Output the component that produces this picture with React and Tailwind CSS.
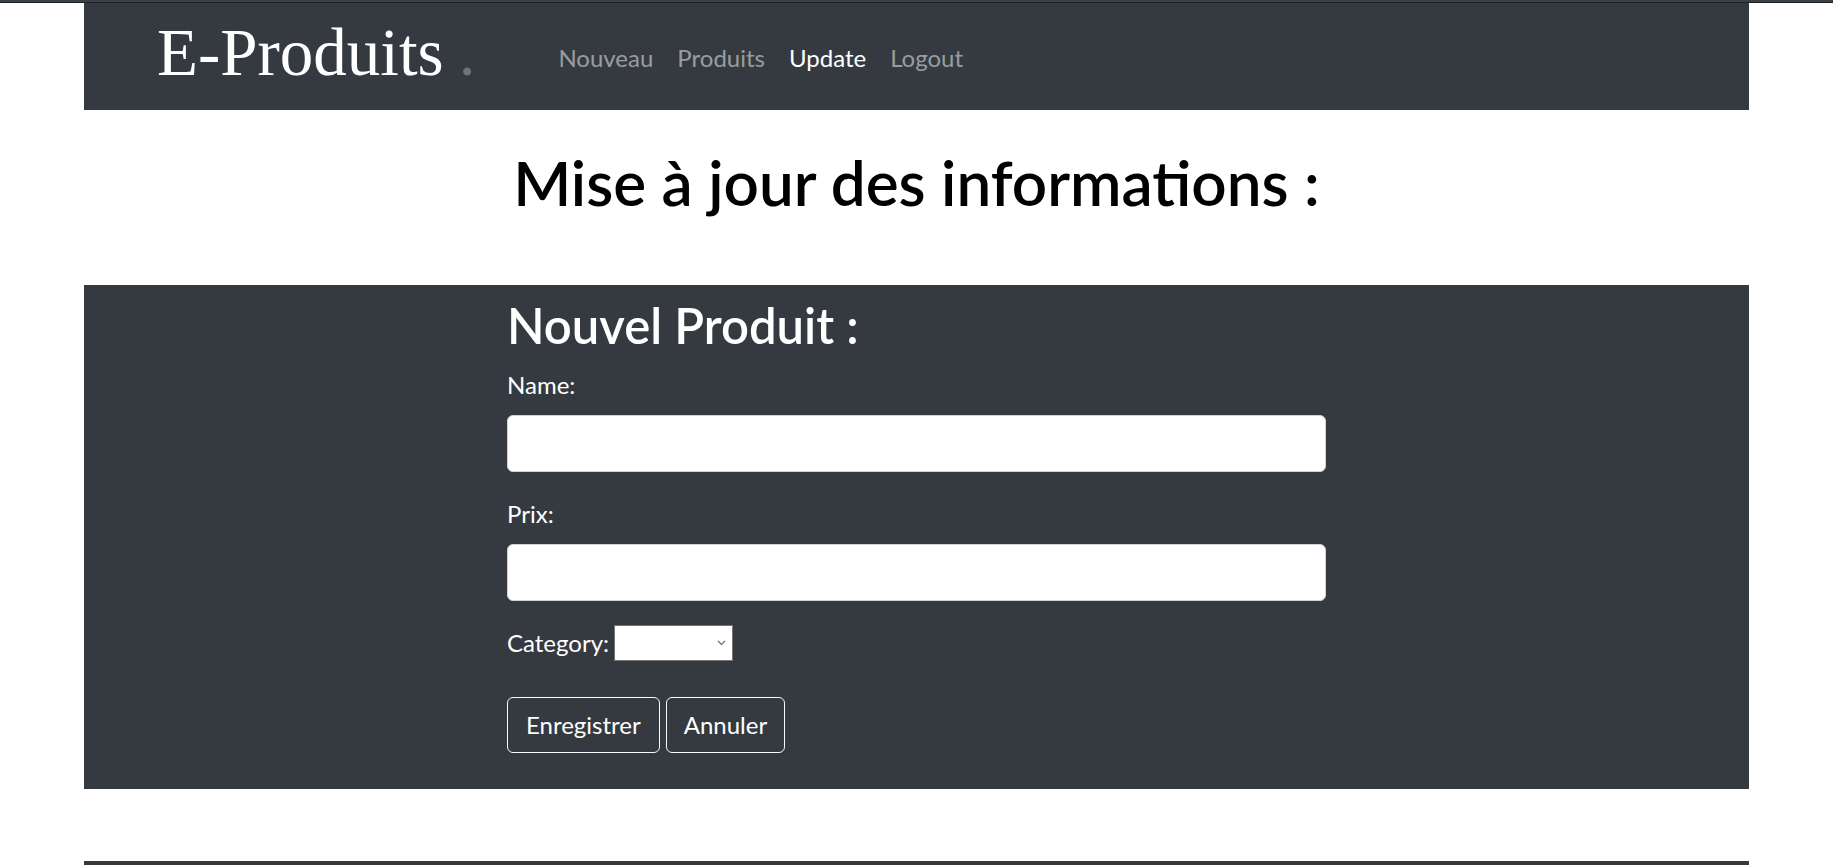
import React, { useState } from 'react';

const sans = "font-['Segoe_UI',Lato,'Noto_Sans',sans-serif]";

const App = () => {
  const [name, setName] = useState('');
  const [prix, setPrix] = useState('');
  const [category, setCategory] = useState('');

  const links = [
    { label: 'Nouveau', active: false },
    { label: 'Produits', active: false },
    { label: 'Update', active: true },
    { label: 'Logout', active: false },
  ];

  return (
    <div className={`min-h-screen bg-white ${sans}`}>
      <div className="h-[3px] bg-[#3b4148] border-b border-[#1d2125]" />
      <div className="w-[1665px] mx-auto">
        <nav className="h-[107px] bg-[#343a40] flex items-start pl-[73px]">
          <a className="pt-[11px] font-['Liberation_Serif',serif] text-[67px] leading-[1.15] text-white">
            E-Produits<span className="ml-[15px] text-[#6c757d]">.</span>
          </a>
          <ul className="flex ml-[71px] pt-[37px]">
            {links.map((l) => (
              <li key={l.label}>
                <a
                  className={`block px-3 text-[24px] leading-9 ${
                    l.active ? 'text-white' : 'text-white/50'
                  }`}
                >
                  {l.label}
                </a>
              </li>
            ))}
          </ul>
        </nav>

        <h1 className="mt-[35px] mb-[66px] text-center text-[62px] leading-[1.2] font-semibold text-black">
          Mise à jour des informations :
        </h1>

        <div className="bg-[#343a40] pt-3 pb-9">
          <form className="w-[819px] mx-auto text-white" onSubmit={(e) => e.preventDefault()}>
            <h2 className="text-[49px] leading-[1.2] font-semibold mb-3 -mt-[1px]">Nouvel Produit :</h2>
            <div className="mb-6">
              <label className="block text-[24px] leading-9 mb-3">Name:</label>
              <input
                value={name}
                onChange={(e) => setName(e.target.value)}
                className="block w-full h-[57px] bg-white border border-[#ced4da] rounded-[6px] px-[18px] text-[24px] text-[#495057]"
              />
            </div>
            <div className="mb-6">
              <label className="block text-[24px] leading-9 mb-3">Prix:</label>
              <input
                value={prix}
                onChange={(e) => setPrix(e.target.value)}
                className="block w-full h-[57px] bg-white border border-[#ced4da] rounded-[6px] px-[18px] text-[24px] text-[#495057]"
              />
            </div>
            <div className="flex items-center h-9 mb-9">
              <label className="text-[24px] leading-9 mr-[5px]">Category:</label>
              <div className="relative w-[119px] h-9 bg-white border border-[#767676]">
                <select
                  value={category}
                  onChange={(e) => setCategory(e.target.value)}
                  className="appearance-none w-full h-full bg-transparent text-black text-[20px] pl-1"
                >
                  <option value=""></option>
                </select>
                <svg
                  className="absolute right-[6px] top-[14px] pointer-events-none"
                  width="9"
                  height="6"
                  viewBox="0 0 9 6"
                  fill="none"
                >
                  <path d="M1 1l3.5 3.5L8 1" stroke="#6b6b6b" strokeWidth="1.2" />
                </svg>
              </div>
            </div>
            <div className="flex gap-[6px]">
              <button
                type="submit"
                className="h-[56px] px-[18px] border border-[#f8f9fa] rounded-[6px] text-[24px] leading-9 text-white"
              >
                Enregistrer
              </button>
              <button
                type="button"
                className="h-[56px] px-[17px] border border-[#f8f9fa] rounded-[6px] text-[24px] leading-9 text-white"
              >
                Annuler
              </button>
            </div>
          </form>
        </div>

        <footer className="mt-[72px] h-[40px] bg-[#343a40]" />
      </div>
    </div>
  );
};

export default App;
